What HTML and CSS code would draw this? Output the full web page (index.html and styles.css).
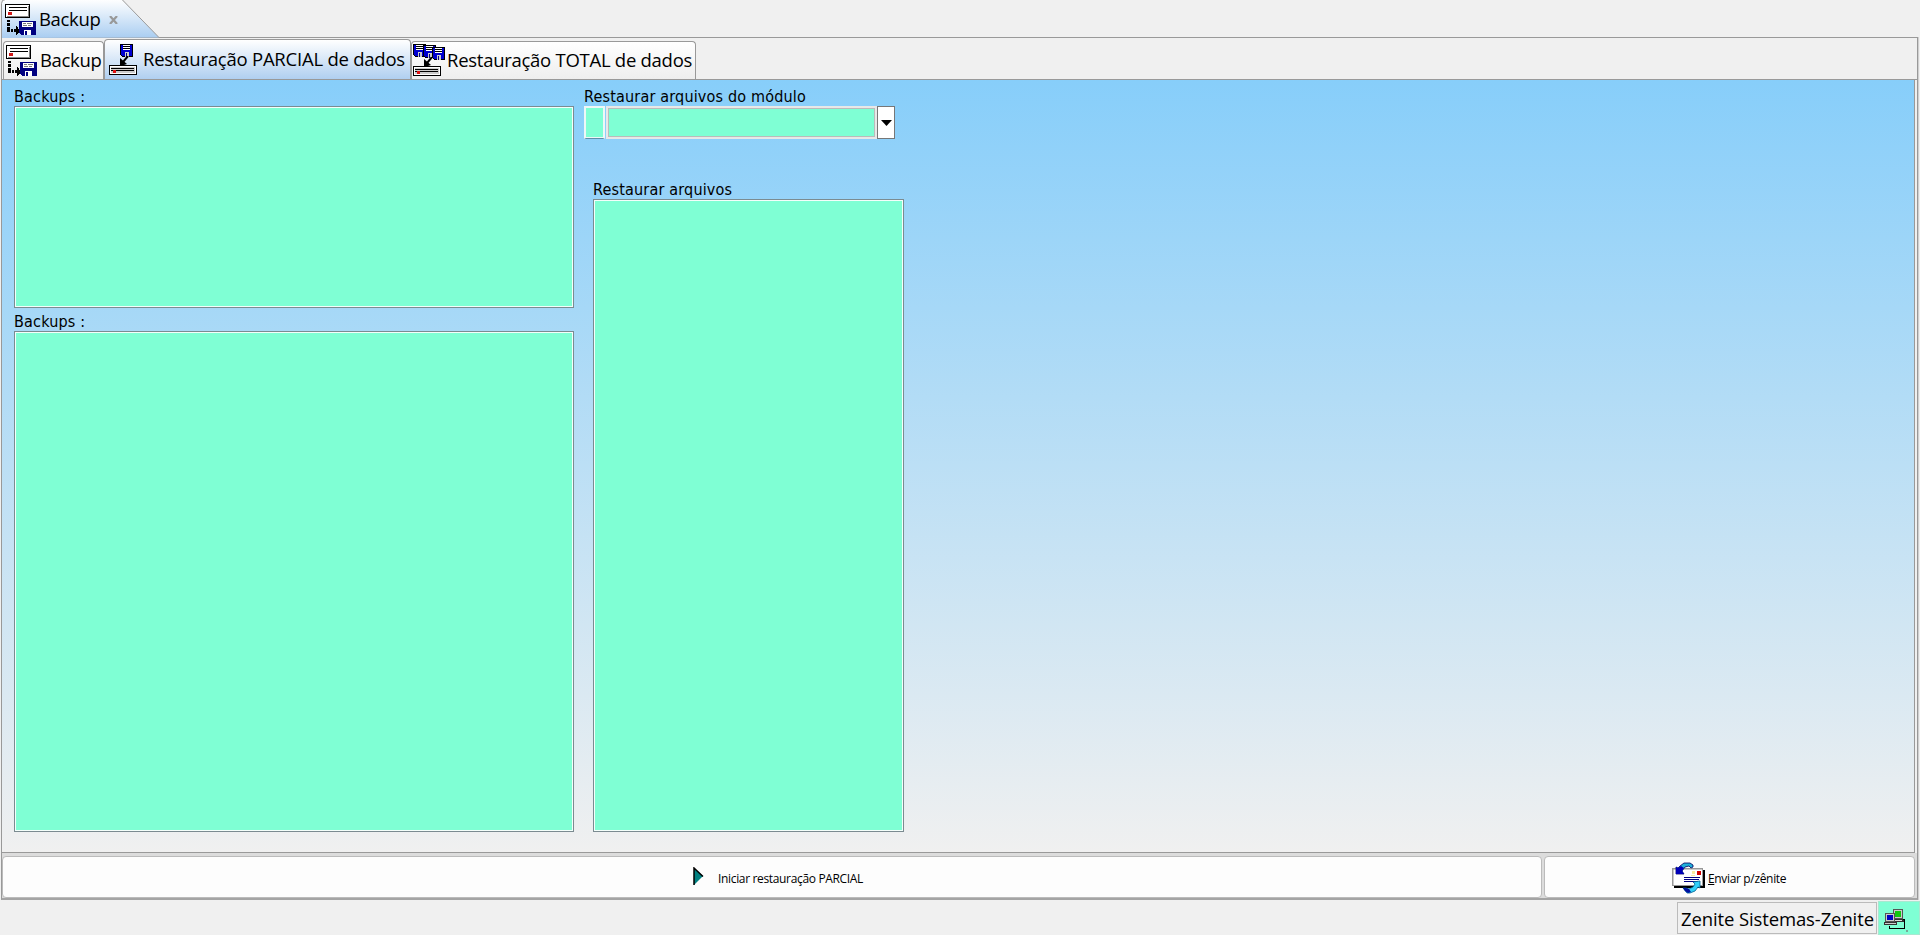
FILE: index.html
```html
<!DOCTYPE html>
<html lang="pt-BR">
<head>
<meta charset="utf-8">
<title>Backup</title>
<link rel="stylesheet" href="styles.css">
</head>
<body>
<svg class="defs" aria-hidden="true">
  <symbol id="backup" viewBox="0 0 32 32" shape-rendering="crispEdges">
    <path fill="#000" d="M0 0h25v14H0z"/><path fill="#fff" d="M1 1h23v12H1z"/><path fill="#888" d="M23 2h1v11h-1zM2 12h21v1H2z"/>
    <path fill="#000" d="M4 3h18v1H4zM4 6h18v1H4z"/><path fill="#d01818" d="M3 8h4v3H3z"/>
    <path fill="#000" d="M2 16h3v2H2zM2 19h3v3H2zM2 23h3v5H2zM6 25h2v3H6zM9 25h3v3H9zM11 22h1v9h-1zM12 23h1v7h-1zM13 25h1v4h-1z"/>
    <path fill="#000080" d="M14 17h17v14H16l-2-2z"/><path fill="#fff" d="M17 18h11v5H17zM19 26h7v5h-7z"/><path fill="#777" d="M18 19h3v1h-3zM22 19h5v1h-5zM18 21h4v1h-4zM23 21h3v1h-3z"/><path fill="#000080" d="M20 27h2v4h-2z"/>
  </symbol>
  <symbol id="floppy" viewBox="0 0 13 13" shape-rendering="crispEdges">
    <path fill="#000" d="M0 0h13v13H2l-2-2z"/><path fill="#0000d0" d="M1 1h11v11H2l-1-1z"/><path fill="#fff" d="M3 1h7v5H3z"/><path fill="#ccc" d="M5 8h4v5H5z"/><path fill="#000" d="M3 2h7v1H3zM3 4h7v1H3z"/><path fill="#000080" d="M6 9h1v4H6z"/>
  </symbol>
  <symbol id="drive" viewBox="0 0 28 10" shape-rendering="crispEdges">
    <path fill="#000" d="M0 0h28v10H0z"/><path fill="#fff" d="M1 1h26v8H1z"/><path fill="#ccc" d="M2 2h24v6H2z"/><path fill="#000" d="M2 3h23v1H2zM2 5h23v1H2z"/><path fill="#e01010" d="M4 5h3v3H4z"/>
  </symbol>
  <symbol id="arrow" viewBox="0 0 9 9"><path d="M8 0 3 6" stroke="#000" stroke-width="2"/><path d="M0 9V2l7 6-3 1z"/></symbol>
</svg>

<header class="windowtabs">
  <svg class="docshape" width="160" height="38" viewBox="0 0 160 38">
    <defs><linearGradient id="tabfill" x2="0" y2="1"><stop offset="0" stop-color="#fff"/><stop offset="1" stop-color="#a9cdf1"/></linearGradient></defs>
    <path fill="url(#tabfill)" stroke="#999" d="M1.500 38V3.500q0-4 4-4H122L159 37.500"/>
  </svg>
  <div class="doctab">
    <svg class="ico32"><use href="#backup"/></svg>
    <span class="t-doc">Backup</span>
    <svg class="close" viewBox="0 0 9 8"><path d="m1 0 7 8M8 0 1 8" stroke="#999" stroke-width="2.200"/></svg>
  </div>
</header>

<main class="frame">
  <nav class="tabs">
    <div class="tab tab-a"><svg class="ico32"><use href="#backup"/></svg><span class="t-doc">Backup</span></div>
    <div class="tab tab-b active">
      <svg class="ico28" viewBox="0 0 28 32"><use href="#floppy" x="11" width="13" height="13"/><use href="#arrow" x="11" y="12" width="9" height="9"/><use href="#drive" y="21" width="28" height="10"/></svg>
      <span class="t-part">Restauração PARCIAL de dados</span>
    </div>
    <div class="tab tab-c">
      <svg class="ico32" viewBox="0 0 32 32"><use href="#floppy" x="0" width="13" height="13"/><use href="#floppy" x="10" y="1" width="13" height="13"/><use href="#floppy" x="19" y="3" width="13" height="13"/><use href="#arrow" x="11" y="13" width="9" height="9"/><use href="#drive" y="22" width="28" height="10"/></svg>
      <span class="t-total">Restauração TOTAL de dados</span>
    </div>
  </nav>

  <section class="page">
    <div class="col-left">
      <label class="t-backups">Backups :</label>
      <div class="list list-top"></div>
      <label class="t-backups second">Backups :</label>
      <div class="list grow"></div>
    </div>
    <div class="col-right">
      <label class="t-module">Restaurar arquivos do módulo</label>
      <div class="combo">
        <div class="code"></div>
        <div class="value"></div>
        <div class="drop"><svg viewBox="0 0 11 6"><path d="M0 0h11L5.500 6z"/></svg></div>
      </div>
      <div class="files">
        <label class="t-files">Restaurar arquivos</label>
        <div class="list grow"></div>
      </div>
    </div>
  </section>

  <footer class="actions">
    <div class="btn btn-start">
      <svg class="play" viewBox="0 0 11 19"><path fill="#008080" d="M1 1v17l9-9z"/><path fill="none" stroke="#000" stroke-width="1.500" d="M1 18V1l9 8.500"/></svg>
      <span class="t-start">Iniciar restauração PARCIAL</span>
    </div>
    <div class="btn btn-send">
      <svg class="mail" viewBox="0 0 33 32">
        <path fill="#000" d="M2 8h31v18H2z"/><path fill="#999" d="M0 6h31v18H0z"/><path fill="#fff" d="M1.500 7.500h28.500v15.500H1.500z"/>
        <path fill="#f7e9a0" d="M20 9h3v3h-3zM19 13h4v1h-4z"/><path fill="#d00000" d="M25 9h4v4h-4z"/>
        <path stroke="#000080" d="M12 15.500h16M12 17.500h15M12 19.500h14"/>
        <path fill="#20b0d8" stroke="#000060" stroke-width=".8" d="M21 5V3L18 1h-6L8 4 6 6 4 5v7h8l-2-3 3-4 4-1 2 2z"/><path fill="#0000b8" d="M4 5v7h8l-2-3 2-3-3-2-3 2z"/>
        <path fill="#30d0f8" stroke="#006090" stroke-width=".8" d="M11 26h3l3 1 4-2 2-3-2-2 7-1v7l-2-1-3 4-5 2h-3z"/><path fill="#0010a0" d="M11 26h3l3 1 2 3-3 1-3-2z"/>
      </svg>
      <span class="t-send"><u>E</u>nviar p/zênite</span>
    </div>
  </footer>
</main>

<footer class="status">
  <div class="company"><span class="t-company">Zenite Sistemas-Zenite</span></div>
  <div class="net">
    <svg viewBox="0 0 26 24" shape-rendering="crispEdges">
      <path fill="#555" d="M9 0h10v10H9z"/><path fill="#ccc" d="M10 1h8v8h-8z"/><path fill="#10c810" d="M11 2h6v6h-6z"/><path fill="#333" d="M8 10h12v3H8z"/><path fill="#ddd" d="M9 11h9v1H9z"/>
      <path fill="#555" d="M1 4h10v9H1z"/><path fill="#ccc" d="M2 5h8v7H2z"/><path fill="#0000c0" d="M3 6h6v5H3z"/><path fill="#333" d="M0 13h13v3H0z"/><path fill="#ccc" d="M1 14h11v1H1z"/>
      <path fill="none" stroke="#000" d="M18.500 10.500h2v9h-15v-3"/><path fill="#78a898" d="M22 21h2v2h-2z"/>
    </svg>
  </div>
</footer>
</body>
</html>
```
FILE: styles.css
```css
* { box-sizing: border-box; }
body {
  margin: 0;
  width: 1920px;
  height: 935px;
  overflow: hidden;
  display: flex;
  flex-direction: column;
  background: #f0f0f0;
  color: #000;
  font-family: "Open Sans", "Noto Sans", sans-serif;
  font-size: 18.500px;
  line-height: 24px;
  white-space: nowrap;
}
svg { display: block; flex: none; }
.defs { position: absolute; width: 0; height: 0; }
.ico32 { width: 32px; height: 32px; }
.ico28 { width: 28px; height: 32px; }

.windowtabs { position: relative; height: 37px; flex: none; }
.docshape { position: absolute; left: 0; top: 0; }
.doctab { position: relative; display: flex; padding: 4px 0 0 5px; }
.t-doc { letter-spacing: -0.35px; }
.doctab .t-doc { margin: 3px 0 0 2px; width: 70px; }
.close { width: 9px; height: 8px; margin-top: 12px; }

.frame {
  height: 863px;
  flex: none;
  width: 1917px;
  margin-left: 1px;
  border: 1px solid #999;
  border-bottom: 2px solid #a4a4a4;
  box-shadow: 1px 0 #d0d0d0;
  display: flex;
  flex-direction: column;
}
.tabs { display: flex; align-items: flex-end; height: 42px; flex: none; padding-left: 1px; border-bottom: 1px solid #999; }
.tab {
  display: flex;
  height: 38px;
  border: 1px solid #999;
  border-bottom: 0;
  border-radius: 4px 4px 0 0;
  background: linear-gradient(#fff, #eee);
}
.tab-a { width: 101px; padding: 3px 0 0 2px; }
.tab-b { width: 307px; height: 40px; padding: 4px 0 0 4px; background: linear-gradient(#fff, #b0cff0); }
.tab-c { width: 285px; padding: 2px 0 0 1px; }
.tab-a .t-doc { margin: 3px 0 0 2px; }
.t-part { margin: 3px 0 0 6px; letter-spacing: -0.23px; }
.t-total { margin: 4px 0 0 2px; letter-spacing: -0.27px; }

.page {
  height: 773px;
  flex: none;
  display: flex;
  margin-right: 2px;
  border-bottom: 1px solid #999;
  border-right: 1px solid #999;
  background: linear-gradient(#87cefa, #f0f0f0);
  padding: 7px 0 20px 12px;
}
.page label {
  display: block;
  font-family: "DejaVu Sans Condensed", "DejaVu Sans", sans-serif;
  font-stretch: condensed;
  font-size: 16px;
  letter-spacing: 0.18px;
  height: 19px;
  line-height: 20px;
}
.col-left { width: 560px; display: flex; flex-direction: column; }
.list { background: #7fffd4; border: 1px solid #7b8b91; box-shadow: inset 0 0 0 1px #f4fffb; }
.list-top { height: 202px; }
.page .second { height: 23px; padding-top: 4px; }
.grow { flex: 1; }
.col-right { margin-left: 10px; width: 320px; display: flex; flex-direction: column; }
.combo { display: flex; height: 33px; }
.code { width: 21px; background: #7fffd4; border: 2px solid #eef7f7; border-bottom: 1px solid #5f8fa8; box-shadow: inset 0 -1px #eef7f7; }
.value { width: 271px; margin-left: 1px; background: #7fffd4; border: 1px solid #e8e8e8; outline: 1px solid #bbb; outline-offset: -3px; box-shadow: inset 0 0 0 1px #e8e8e8; }
.drop { width: 18px; background: #fff; border: 1px solid #777; display: grid; place-items: center; }
.drop svg { width: 11px; height: 6px; }
.files { flex: 1; margin: 41px 0 0 9px; display: flex; flex-direction: column; }

.actions { flex: 1; display: flex; gap: 2px; padding: 3px 2px 0 0; background: #dcdcdc; }
.btn { background: #fdfdfd; border: 1px solid #bbb; border-radius: 4px; display: flex; font-size: 12px; line-height: 16px; }
.btn-start { width: 1540px; padding: 10px 0 0 690px; }
.btn-send { flex: 1; padding: 5px 0 0 127px; }
.play { width: 11px; height: 19px; }
.t-start { margin: 4px 0 0 14px; letter-spacing: -0.34px; }
.mail { width: 33px; height: 32px; }
.t-send { margin: 9px 0 0 3px; letter-spacing: -0.34px; }

.status { flex: 1; display: flex; justify-content: flex-end; padding-top: 1px; gap: 1px; }
.company { width: 200px; height: 32px; margin-top: 1px; border: 1px solid #bbb; padding: 4px 0 0 3px; }
.t-company { letter-spacing: -0.12px; }
.net { width: 42px; background: #7fffd4; padding: 7px 0 0 5px; border: 1px solid #a8e8d0; }
.net svg { width: 26px; height: 24px; }
```
